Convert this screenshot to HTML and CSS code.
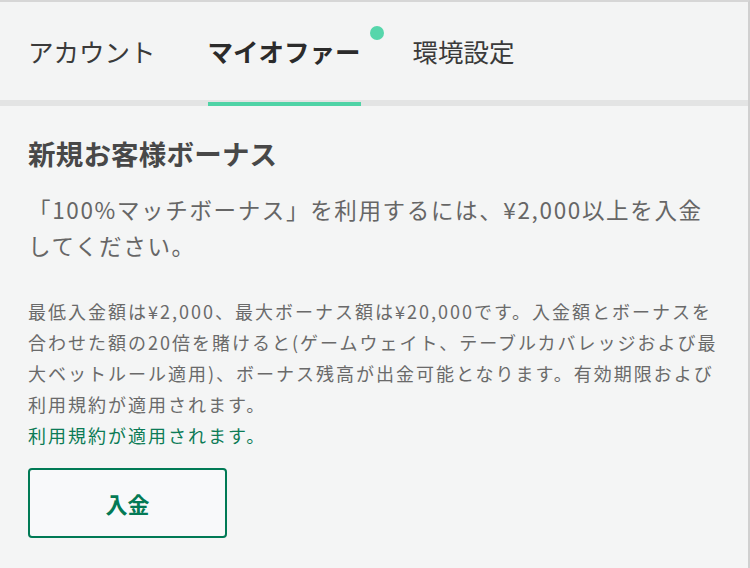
FILE: index.html
```html
<!DOCTYPE html>
<html lang="ja">
<head>
<meta charset="utf-8">
<link rel="stylesheet" href="styles.css">
</head>
<body>
<div class="page">
  <nav class="tabs">
    <div class="tab">アカウント</div>
    <div class="tab active">マイオファー<span class="dot"></span></div>
    <div class="tab">環境設定</div>
  </nav>
  <div class="divider"></div>
  <main class="content">
    <h1 class="title">新規お客様ボーナス</h1>
    <p class="lead">「100%マッチボーナス」を利用するには、¥2,000以上を入金してください。</p>
    <p class="terms">最低入金額は¥2,000、最大ボーナス額は¥20,000です。入金額とボーナスを合わせた額の20倍を賭けると(ゲームウェイト、テーブルカバレッジおよび最大ベットルール適用)、ボーナス残高が出金可能となります。有効期限および利用規約が適用されます。<br><a class="link" href="#">利用規約が適用されます。</a></p>
    <button class="btn">入金</button>
  </main>
</div>
</body>
</html>
```

FILE: styles.css
```css
* { box-sizing: border-box; }
html, body { margin: 0; padding: 0; }
body {
  width: 750px;
  height: 568px;
  overflow: hidden;
  background: #f4f5f5;
  font-family: "Noto Sans CJK JP", "Noto Sans", sans-serif;
}
.page {
  height: 568px;
  border-top: 2px solid #d6d6d6;
  border-right: 2px solid #d0d0d0;
  background: #f4f5f5;
}
.tabs {
  display: flex;
  align-items: center;
  gap: 52px;
  height: 98px;
  padding-left: 28px;
  background: #f3f4f4;
}
.tab {
  position: relative;
  font-size: 25.5px;
  color: #3a3a3a;
  line-height: 98px;
  height: 98px;
}
.tab.active {
  font-weight: 700;
  color: #2b2b2b;
}
.tab.active::after {
  content: "";
  position: absolute;
  left: 0;
  right: 0;
  bottom: -6px;
  height: 4px;
  background: #4fd3a6;
  z-index: 2;
}
.dot {
  position: absolute;
  right: -23px;
  top: 24px;
  width: 14px;
  height: 14px;
  border-radius: 50%;
  background: #56d6ab;
}
.divider {
  height: 6px;
  background: #e3e4e4;
}
.content {
  padding: 27px 30px 0 28px;
}
.title {
  margin: 0;
  font-size: 27.5px;
  letter-spacing: 0.2px;
  font-weight: 700;
  color: #484848;
  line-height: 40px;
}
.lead {
  margin: 18px 0 0;
  font-size: 22.5px;
  letter-spacing: 1.65px;
  color: #666;
  line-height: 36px;
}
.terms {
  margin: 33px 0 0;
  font-size: 18px;
  letter-spacing: 2px;
  color: #6a6a6a;
  line-height: 31px;
}
.link {
  color: #0c7b56;
  text-decoration: none;
}
.btn {
  display: block;
  margin-top: 17px;
  width: 199px;
  height: 70px;
  border: 2px solid #007a55;
  border-radius: 4px;
  background: #f8f9fa;
  color: #047a55;
  font-family: inherit;
  font-size: 22px;
  font-weight: 700;
  padding: 0;
}
```
